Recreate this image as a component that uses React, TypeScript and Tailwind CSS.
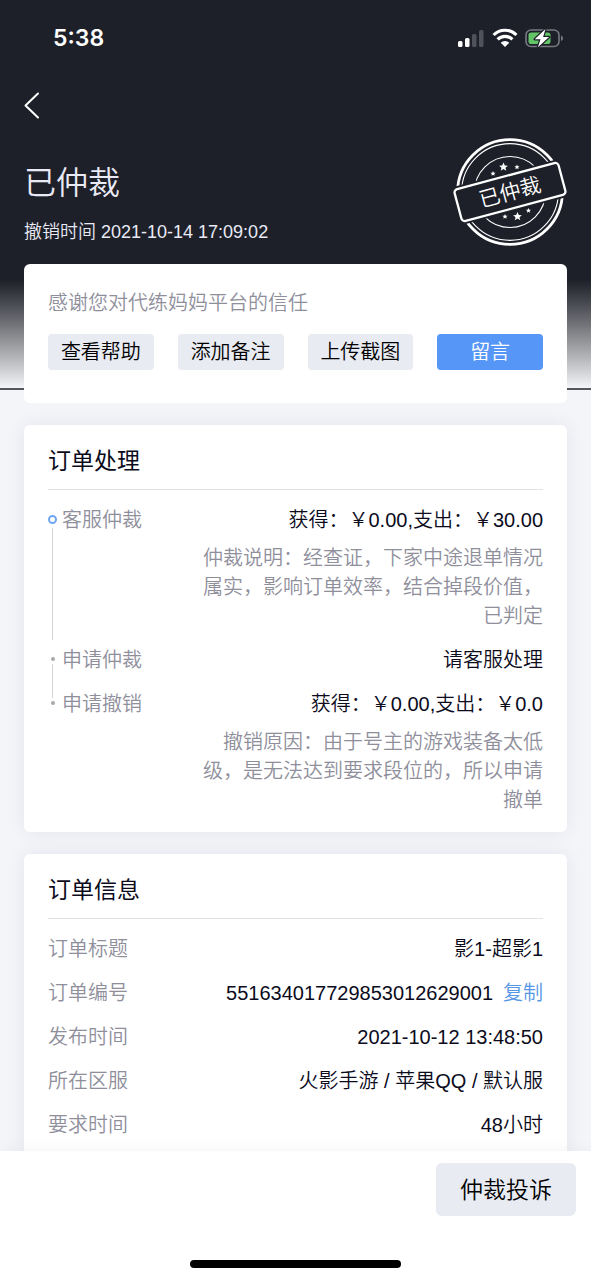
import { ReactNode } from "react";

type ProcessItem = {
  label: string;
  value: string;
  note?: string;
  active?: boolean;
  lineClass?: string;
};

// 订单处理记录（最新的在最上面）
const processList: ProcessItem[] = [
  {
    label: "客服仲裁",
    value: "获得：￥0.00,支出：￥30.00",
    note: "仲裁说明：经查证，下家中途退单情况属实，影响订单效率，结合掉段价值，已判定",
    active: true,
    lineClass: "mt-1 mb-1.5",
  },
  {
    label: "申请仲裁",
    value: "请客服处理",
    lineClass: "-mb-2",
  },
  {
    label: "申请撤销",
    value: "获得：￥0.00,支出：￥0.0",
    note: "撤销原因：由于号主的游戏装备太低级，是无法达到要求段位的，所以申请撤单",
  },
];

const orderInfo = [
  { label: "订单标题", value: "影1-超影1" },
  { label: "订单编号", value: "551634017729853012629001", copyable: true },
  { label: "发布时间", value: "2021-10-12 13:48:50" },
  { label: "所在区服", value: "火影手游 / 苹果QQ / 默认服" },
  { label: "要求时间", value: "48小时" },
];

const actions = ["查看帮助", "添加备注", "上传截图"];

// 五角星
const STAR = "M0 -4 L1.2 -1.3 L4 -1.2 L1.8 0.6 L2.5 3.4 L0 1.8 L-2.5 3.4 L-1.8 0.6 L-4 -1.2 L-1.2 -1.3 Z";

const StatusBar = () => (
  <div className="flex h-[76px] items-center justify-between pr-7 pl-[53px]">
    <span className="font-['Inter',sans-serif] text-[23px] font-semibold text-white">5:38</span>
    <svg width="106" height="22" viewBox="0 0 106 22" aria-hidden="true">
      {/* 信号 */}
      <rect x="1" y="14" width="4.500" height="6" rx="1.500" fill="#fff" />
      <rect x="8" y="11" width="4.500" height="9" rx="1.500" fill="#fff" />
      <rect x="15" y="7" width="4.500" height="13" rx="1.500" fill="#50525b" />
      <rect x="22" y="3" width="4.500" height="17" rx="1.500" fill="#50525b" />
      {/* WiFi */}
      <g fill="none" stroke="#fff" strokeWidth="3.2">
        <path d="M36.600 8a16 16 0 0 1 22.800 0" />
        <path d="M40.600 12.400a10.400 10.400 0 0 1 14.800 0" />
      </g>
      <path d="M48 20l-4.300-4.300a6.200 6.200 0 0 1 8.600 0z" fill="#fff" />
      {/* 电池 */}
      <rect x="69" y="3" width="33" height="16.500" rx="5" fill="none" stroke="#777981" strokeWidth="1.600" />
      <path d="M104 8.500q2 .8 2 2.800t-2 2.800z" fill="#777981" />
      <rect x="71.500" y="5.500" width="22" height="11.500" rx="2.800" fill="#62c466" />
      <path
        d="M88.500 2l-10.800 10.200h5.800l-2.600 8 11.200-10.200h-6z"
        fill="#fff"
        stroke="#1e2029"
        strokeWidth="2.400"
        strokeLinejoin="round"
        paintOrder="stroke"
      />
    </svg>
  </div>
);

const Stamp = () => (
  <svg className="shrink-0" width="114" height="108" viewBox="0 0 114 108" role="img" aria-label="已仲裁">
    <g fill="none" stroke="#fff">
      <circle cx="57" cy="54" r="52.400" strokeWidth="2.800" />
      <circle cx="57" cy="54" r="48.400" strokeWidth="1.100" />
      <circle cx="57" cy="54" r="35.500" strokeWidth="1.100" />
    </g>
    <g fill="#fff">
      <path d={STAR} transform="translate(50.500 29) scale(1.100)" />
      <path d={STAR} transform="translate(40 35.500) scale(.65)" />
      <path d={STAR} transform="translate(64 29) scale(.65)" />
      <path d={STAR} transform="translate(64.500 78.500) scale(1.100)" />
      <path d={STAR} transform="translate(52 78.500) scale(.65)" />
      <path d={STAR} transform="translate(75.500 72.500) scale(.65)" />
    </g>
    <g transform="rotate(-15 57 54)">
      <rect x="0" y="34.500" width="114" height="39" fill="#1e2029" />
      <rect x="3.200" y="37.500" width="107.600" height="33" rx="3.500" fill="#1e2029" stroke="#fff" strokeWidth="2.300" />
      <text x="57" y="61.500" textAnchor="middle" fontSize="21" fill="#fff">
        已仲裁
      </text>
    </g>
  </svg>
);

const Card = ({ title, children }: { title: string; children: ReactNode }) => (
  <section className="rounded-md bg-white px-6 pt-[21px] pb-[17px] shadow-[0_0_20px_rgba(30,32,60,0.07)]">
    <h2 className="border-b border-[#e3e3e7] pb-[13px] text-[23px] leading-[30px] font-normal">{title}</h2>
    {children}
  </section>
);

const App = () => {
  // 复制订单编号
  const handleCopy = (text: string) => {
    navigator.clipboard?.writeText(text);
  };

  return (
    <div className="min-h-screen bg-[#f4f5f9] pb-3 font-['Liberation_Sans','Noto_Sans_CJK_SC',sans-serif] text-[20px] leading-[29px] font-[350] text-[#0b0b1c]">
      {/* 顶部 */}
      <header className="h-[390px] border-b-2 border-[#55565e] bg-linear-to-b from-[#1e2029] from-72% via-[#85868a] via-86% to-[#f4f5f9] text-[#e9eaf5]">
        <StatusBar />
        <div className="px-6">
          <button type="button" aria-label="返回" className="mt-4 block">
            <svg width="16" height="27" viewBox="0 0 16 27" fill="none" stroke="#fff" strokeWidth="2" strokeLinecap="round" strokeLinejoin="round">
              <path d="M14 1.500L1.500 13.500L14 25.500" />
            </svg>
          </button>
          <div className="mt-[19px] flex items-start justify-between">
            <div className="pt-[25px]">
              <h1 className="text-[32px] leading-10 font-[350]">已仲裁</h1>
              <p className="mt-4 text-[18px] leading-[26px]">撤销时间 2021-10-14 17:09:02</p>
            </div>
            <Stamp />
          </div>
        </div>
      </header>

      <main className="relative -mt-[126px] flex flex-col gap-[22px] px-6">
        <section className="rounded-md bg-white px-6 pt-[25px] pb-[33px]">
          <p className="leading-7 text-[#8f8f9c]">感谢您对代练妈妈平台的信任</p>
          <div className="mt-[17px] grid grid-cols-4 gap-6">
            {actions.map((text) => (
              <button key={text} type="button" className="h-9 rounded-sm bg-[#e9ebf3] pt-px text-black">
                {text}
              </button>
            ))}
            <button type="button" className="h-9 rounded-sm bg-[#5596f7] pt-px text-white">
              留言
            </button>
          </div>
        </section>

        <Card title="订单处理">
          <ul className="pt-4">
            {processList.map((item) => (
              <li key={item.label} className="flex group">
                <div className="flex w-[9px] shrink-0 flex-col items-center">
                  <div className="flex h-[18px] items-end">
                    {item.active ? (
                      <i className="size-[9px] rounded-full border-2 border-[#6fa5f3]" />
                    ) : (
                      <i className="mb-[3px] size-1 rounded-full bg-[#a9a9ad]" />
                    )}
                  </div>
                  {item.lineClass && <div className={`w-px flex-1 bg-[#d3d3d6] ${item.lineClass}`} />}
                </div>
                <span className="ml-[5px] shrink-0 text-[#8f8f9c]">{item.label}</span>
                <div className="ml-auto w-[342px] pb-[15px] text-right group-last:pb-0">
                  <p>{item.value}</p>
                  {item.note && <p className="mt-[9px] text-[#8f8f9c]">{item.note}</p>}
                </div>
              </li>
            ))}
          </ul>
        </Card>

        <Card title="订单信息">
          <dl className="flex flex-col gap-[15px] pt-4">
            {orderInfo.map((item) => (
              <div key={item.label} className="flex justify-between">
                <dt className="text-[#8f8f9c]">{item.label}</dt>
                <dd className="flex gap-2.5">
                  {item.value}
                  {item.copyable && (
                    <button type="button" className="text-[#5596e6]" onClick={() => handleCopy(item.value)}>
                      复制
                    </button>
                  )}
                </dd>
              </div>
            ))}
          </dl>
        </Card>
      </main>

      {/* 底部操作栏 */}
      <footer className="fixed inset-x-0 bottom-0 flex h-[129px] flex-col items-center justify-between bg-white pt-3 pb-3 shadow-[0_0_16px_rgba(30,32,60,0.05)]">
        <button type="button" className="mr-[15px] h-[53px] self-end rounded-md bg-[#e9ebf3] px-6 pt-0.5 text-[23px] text-black">
          仲裁投诉
        </button>
        <div className="h-2 w-[211px] rounded-full bg-black" />
      </footer>
    </div>
  );
};

export default App;
